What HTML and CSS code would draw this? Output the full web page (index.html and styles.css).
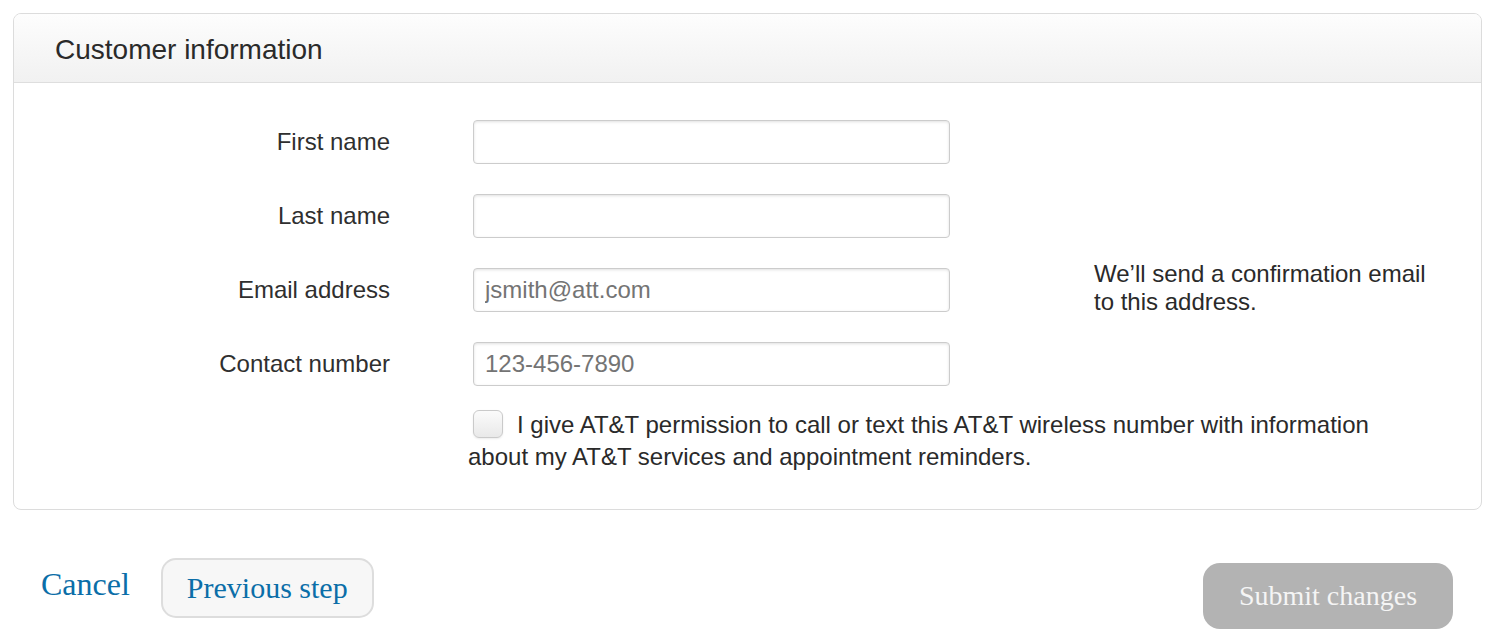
FILE: index.html
```html
<!DOCTYPE html>
<html lang="en">
<head>
<meta charset="utf-8">
<title>Customer information</title>
<link rel="stylesheet" href="styles.css">
</head>
<body>
<div class="page">
  <section class="panel">
    <header class="panel-head">
      <h2 class="panel-title">Customer information</h2>
    </header>
    <div class="panel-body">
      <form class="form-grid">
        <label class="field-label" for="fn">First name</label>
        <input class="field-input" id="fn" type="text">

        <label class="field-label" for="ln">Last name</label>
        <input class="field-input" id="ln" type="text">

        <label class="field-label" for="em">Email address</label>
        <input class="field-input" id="em" type="email" placeholder="jsmith@att.com">
        <p class="field-help">We’ll send a confirmation email to this address.</p>

        <label class="field-label" for="cn">Contact number</label>
        <input class="field-input" id="cn" type="tel" placeholder="123-456-7890">

        <label class="consent"><input class="consent-box" type="checkbox">I give AT&amp;T permission to call or text this AT&amp;T wireless number with information about my AT&amp;T services and appointment reminders.</label>
      </form>
    </div>
  </section>

  <div class="actions">
    <a class="cancel-link" href="#">Cancel</a>
    <button class="btn-secondary" type="button">Previous step</button>
    <button class="btn-submit" type="button" disabled>Submit changes</button>
  </div>
</div>
</body>
</html>
```

FILE: styles.css
```css
html, body {
  margin: 0;
  padding: 0;
  background: #ffffff;
}

.page {
  padding: 13px 17px 0 13px;
  font-family: "Liberation Sans", Arial, Helvetica, sans-serif;
  color: #333333;
}

.panel {
  border: 1px solid #dcdcdc;
  border-radius: 8px;
  background: #ffffff;
  overflow: hidden;
}

.panel-head {
  padding: 22px 41px 18px;
  background: linear-gradient(#fdfdfd, #f1f1f1);
  border-bottom: 1px solid #dedede;
}

.panel-title {
  margin: 0;
  font-size: 28px;
  line-height: 28px;
  font-weight: normal;
  color: #2a2a2a;
}

.panel-body {
  padding: 37px 0 36px;
}

.form-grid {
  display: grid;
  grid-template-columns: 376px 477px auto;
  grid-template-rows: repeat(4, 44px) auto;
  column-gap: 83px;
  row-gap: 30px;
  margin: 0;
}

.field-label {
  grid-column: 1;
  text-align: right;
  font-size: 24px;
  line-height: 44px;
  color: #2f2f2f;
}

.field-input {
  grid-column: 2;
  box-sizing: border-box;
  width: 477px;
  height: 44px;
  margin: 0;
  padding: 0 11px;
  border: 1px solid #cccccc;
  border-radius: 4px;
  box-shadow: inset 0 1px 3px rgba(0, 0, 0, 0.12);
  font-family: "Liberation Sans", Arial, sans-serif;
  font-size: 24px;
  color: #333333;
  background: #ffffff;
  outline: none;
}

.field-input::placeholder {
  color: #747474;
  opacity: 1;
}

.field-help {
  grid-column: 3;
  grid-row: 3;
  align-self: start;
  margin: -8px 0 0 61px;
  width: 340px;
  font-size: 24px;
  line-height: 28px;
  color: #2a2a2a;
}

.consent {
  grid-column: 2 / span 2;
  margin: -7px 0 0 -5px;
  width: 930px;
  font-size: 24px;
  line-height: 32px;
  color: #2a2a2a;
}

.consent-box {
  appearance: none;
  -webkit-appearance: none;
  box-sizing: border-box;
  width: 30px;
  height: 28px;
  margin: 0 14px 0 5px;
  vertical-align: -5px;
  border: 1px solid #cacaca;
  border-radius: 6px;
  background: linear-gradient(#fbfbfb, #e9e9e9);
  box-shadow: 0 1px 2px rgba(0, 0, 0, 0.08);
}

.actions {
  display: flex;
  align-items: flex-start;
  padding-left: 28px;
  padding-right: 29px;
}

.cancel-link {
  margin-top: 58px;
  font-family: "Liberation Serif", "Times New Roman", serif;
  font-size: 32px;
  line-height: 32px;
  color: #0b6ea8;
  text-decoration: none;
}

.btn-secondary {
  margin: 48px 0 0 31px;
  box-sizing: border-box;
  height: 60px;
  padding: 13px 24px;
  border: 2px solid #dddddd;
  border-radius: 15px;
  background: #f7f7f7;
  font-family: "Liberation Serif", "Times New Roman", serif;
  font-size: 30px;
  line-height: 30px;
  color: #0b6ea8;
}

.btn-submit {
  margin: 53px 0 0 auto;
  box-sizing: border-box;
  width: 250px;
  height: 66px;
  padding: 0;
  border: none;
  border-radius: 17px;
  background: #b3b3b3;
  font-family: "Liberation Serif", "Times New Roman", serif;
  font-size: 28px;
  line-height: 28px;
  color: #f5f5f5;
}
```
